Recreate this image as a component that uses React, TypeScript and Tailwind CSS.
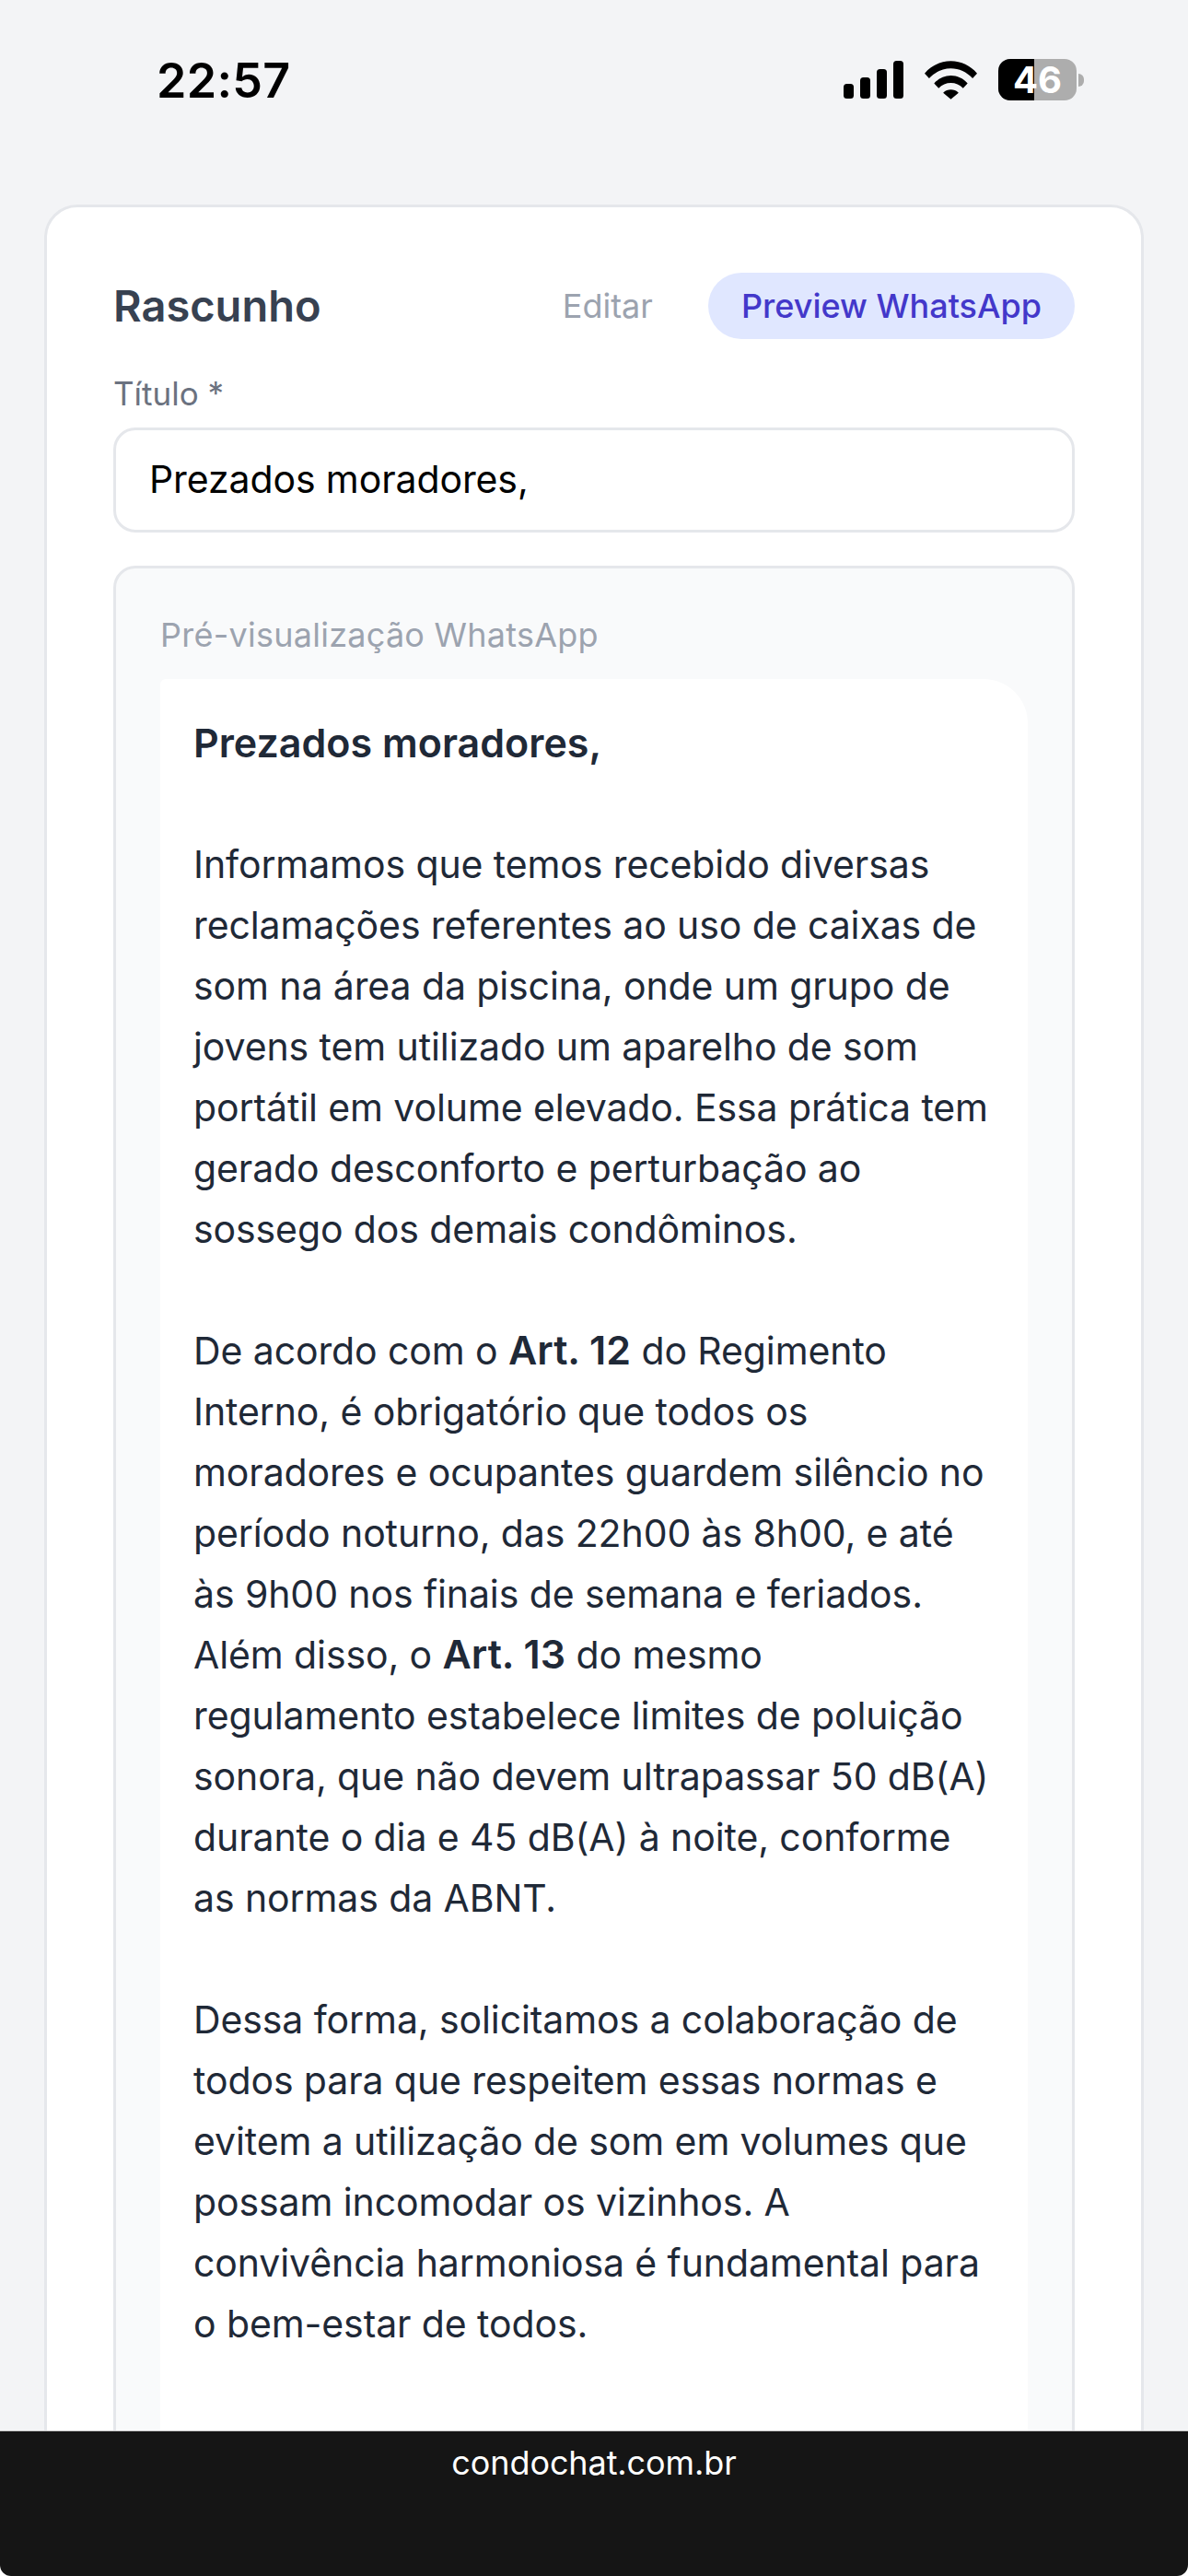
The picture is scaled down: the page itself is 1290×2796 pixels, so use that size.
const F = { fontFamily: 'Inter, sans-serif' };

function Signal() {
  return (
    <svg width="65" height="41" viewBox="0 0 65 41" fill="#000">
      <rect x="0" y="25" width="11" height="16" rx="3.5" />
      <rect x="18" y="18" width="11" height="23" rx="3.5" />
      <rect x="36" y="9" width="11" height="32" rx="3.5" />
      <rect x="54" y="0" width="11" height="41" rx="3.5" />
    </svg>
  );
}

function Wifi() {
  return (
    <svg width="57" height="42" viewBox="0 0 58 42" fill="#000">
      <path d="M0 13.500C7.500 5 17.500 0 29 0s21.500 5 29 13.500l-5 5.500C46.500 12 38 8 29 8S11.500 12 5 19Z" />
      <path d="M10.500 24.500C15.500 19 22 16 29 16s13.500 3 18.500 8.500l-5 5.500C39 26 34 24 29 24s-10 2-13.500 6Z" />
      <path d="M20.500 35C23 32.500 26 31.500 29 31.500s6 1 8.500 3.500L29 42Z" />
    </svg>
  );
}

function Battery() {
  return (
    <div className="flex items-center">
      <div className="relative w-[85px] h-[45px] rounded-[13px] overflow-hidden bg-[#adadad] flex">
        <div className="w-[39px] h-full bg-black" />
        <div className="absolute inset-0 flex items-center justify-center text-white text-[40px] font-bold leading-none">46</div>
      </div>
      <div className="w-[6px] h-[14px] ml-[2px] rounded-r-full bg-[#adadad]" />
    </div>
  );
}

function StatusBar() {
  return (
    <div className="h-[174px] flex justify-between pt-[61px] pl-[170px] pr-[113px]">
      <div className="text-[52px] leading-[54px] font-semibold text-black tracking-[0.3px]">22:57</div>
      <div className="flex items-center h-[45px] mt-[3px] gap-[23px]">
        <Signal />
        <Wifi />
        <Battery />
      </div>
    </div>
  );
}

function B({ children }: { children: string }) {
  return <strong className="font-semibold text-[43px] leading-none tracking-normal">{children}</strong>;
}

function Draft() {
  return (
    <div className="whitespace-nowrap">
      <p className="font-semibold text-[43px] tracking-normal text-[#1f2937]">Prezados moradores,</p>
      <br />
      <p>Informamos que temos recebido diversas<br />reclamações referentes ao uso de caixas de<br />som na área da piscina, onde um grupo de<br />jovens tem utilizado um aparelho de som<br />portátil em volume elevado. Essa prática tem<br />gerado desconforto e perturbação ao<br />sossego dos demais condôminos.</p>
      <br />
      <p>De acordo com o <B>Art. 12</B> do Regimento<br />Interno, é obrigatório que todos os<br />moradores e ocupantes guardem silêncio no<br />período noturno, das 22h00 às 8h00, e até<br />às 9h00 nos finais de semana e feriados.<br />Além disso, o <B>Art. 13</B> do mesmo<br />regulamento estabelece limites de poluição<br />sonora, que não devem ultrapassar 50 dB(A)<br />durante o dia e 45 dB(A) à noite, conforme<br />as normas da ABNT.</p>
      <br />
      <p>Dessa forma, solicitamos a colaboração de<br />todos para que respeitem essas normas e<br />evitem a utilização de som em volumes que<br />possam incomodar os vizinhos. A<br />convivência harmoniosa é fundamental para<br />o bem-estar de todos.</p>
      <br />
      <p>Agradecemos a compreensão e colaboração</p>
    </div>
  );
}

export default function App() {
  return (
    <div className="relative w-[1290px] h-[2796px] overflow-hidden bg-[#f3f4f6]" style={F}>
      <StatusBar />
      <div className="mx-[48px] mt-[48px] h-[3000px] bg-white border-[3px] border-[#e5e7eb] rounded-[36px] px-[72px] pt-[71px]">
        <div className="flex items-center justify-between h-[72px]">
          <h2 className="text-[47px] leading-[72px] font-semibold text-[#374151]">Rascunho</h2>
          <div className="flex items-center gap-[24px]">
            <button className="h-[72px] px-[36px] text-[36px] text-[#9ca3af]">Editar</button>
            <button className="h-[72px] px-[36px] rounded-full text-[36px] font-medium text-[#4338ca] bg-[#e0e7ff]">Preview WhatsApp</button>
          </div>
        </div>
        <label className="block mt-[35px] text-[35px] leading-[48px] text-[#6b7280]">Título *</label>
        <div className="mt-[13px] h-[114px] flex items-center px-[36px] bg-white border-[3px] border-[#e5e7eb] rounded-[24px] text-[41px] tracking-[-0.1px] text-black">Prezados moradores,</div>
        <div className="mt-[36px] bg-[#f9fafb] border-[3px] border-[#e5e7eb] rounded-[24px] px-[48px] pt-[48px]">
          <div className="text-[36px] leading-[48px] font-normal tracking-[0.25px] text-[#9ca3af]">Pré-visualização WhatsApp</div>
          <div className="mt-[24px] bg-white rounded-[48px] rounded-tl-[6px] px-[36px] pt-[36px] pb-[24px] text-[41px] leading-[66px] tracking-[-0.1px] text-[#1f2937]">
            <Draft />
          </div>
        </div>
      </div>
      <div className="absolute left-0 right-0 bottom-0 h-[158px] bg-white">
        <div className="h-full bg-[#151515] rounded-b-[12px] border-t border-[#c8c8c8] flex justify-center">
          <span className="text-[36px] leading-[48px] mt-[10px] tracking-[-0.1px] text-white">condochat.com.br</span>
        </div>
      </div>
    </div>
  );
}
